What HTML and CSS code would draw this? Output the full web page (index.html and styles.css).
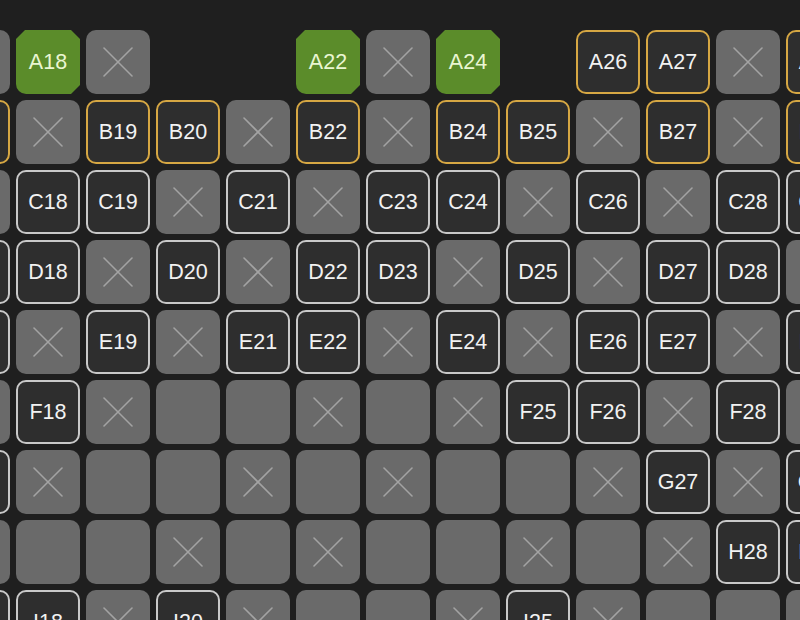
FILE: index.html
```html
<!DOCTYPE html>
<html>
<head>
<meta charset="utf-8">
<link rel="stylesheet" href="styles.css">
</head>
<body>
<div class="grid" id="grid"></div>
<script src="app.js"></script>
</body>
</html>
```
FILE: styles.css
```css
html, body {
  margin: 0;
  padding: 0;
  background: #1f1f1f;
  overflow: hidden;
  width: 800px;
  height: 620px;
}
.grid {
  display: grid;
  grid-template-columns: repeat(13, 64px);
  grid-auto-rows: 64px;
  gap: 6px;
  margin: 30px 0 0 -54px;
  font-family: "Liberation Sans", Arial, sans-serif;
  font-size: 21.5px;
}
.seat {
  box-sizing: border-box;
  border-radius: 10px;
  display: flex;
  align-items: center;
  justify-content: center;
  color: #f2f2f2;
}
.empty { background: transparent; }
.blank, .taken { background: #6a6a6a; }
.taken svg { width: 30px; height: 30px; display: block; }
.taken line { stroke: #a3a3a3; stroke-width: 1.6; stroke-linecap: round; }
.open {
  background: #2e2e2e;
  border: 2px solid #c9c9c9;
}
.gold {
  background: #2e2e2e;
  border: 2px solid #d6a743;
}
.picked {
  background: #5b8c2a;
  color: #eaf6d2;
  border-radius: 0 0 0 10px;
  clip-path: polygon(9px 0, calc(100% - 9px) 0, 100% 9px, 100% calc(100% - 9px), calc(100% - 9px) 100%, 0 100%, 0 9px);
}
```
FILE: app.js
```js
var rows = {
  A: "B G18 X E E G22 X G24 E Y26 Y27 X Y29",
  B: "Y17 X Y19 Y20 X Y22 X Y24 Y25 X Y27 X Y29",
  C: "B W18 W19 X W21 X W23 W24 X W26 X W28 W29",
  D: "W17 W18 X W20 X W22 W23 X W25 X W27 W28 B",
  E: "W17 X W19 X W21 W22 X W24 X W26 W27 X W29",
  F: "B W18 X B B X B X W25 W26 X W28 B",
  G: "W17 X B B X B X B B X W27 X W29",
  H: "B B B X B X B B X B X W28 W29",
  I: "W17 W18 X W20 X B B X W25 X B B B"
};
var grid = document.getElementById("grid");
var cls = { B: "blank", X: "taken", E: "empty", W: "open", Y: "gold", G: "picked" };
Object.keys(rows).forEach(function (r) {
  rows[r].split(" ").forEach(function (t) {
    var d = document.createElement("div");
    var k = t.charAt(0);
    d.className = "seat " + cls[k];
    if (k === "X") {
      d.innerHTML = '<svg viewBox="0 0 30 30"><line x1="1" y1="1" x2="29" y2="29"/><line x1="29" y1="1" x2="1" y2="29"/></svg>';
    } else if (t.length > 1) {
      d.textContent = r + t.slice(1);
    }
    grid.appendChild(d);
  });
});
```
